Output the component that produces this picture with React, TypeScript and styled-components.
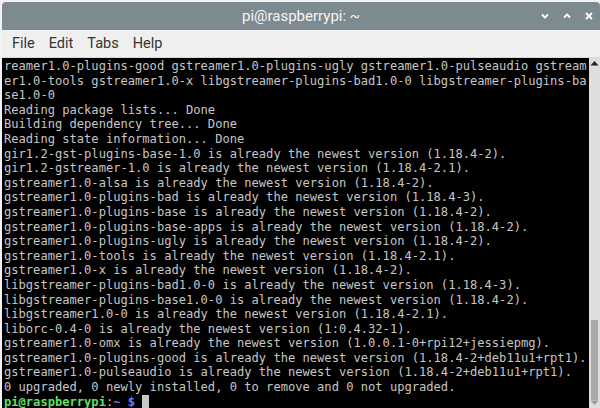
import React from 'react';
import styled, { createGlobalStyle } from 'styled-components';

const GlobalStyle = createGlobalStyle`
  html, body {
    margin: 0;
    padding: 0;
    background: #f2f2f2;
    overflow: hidden;
  }
`;

const Window = styled.div`
  width: 600px;
  height: 408px;
  box-sizing: border-box;
  padding: 2px 0 0 2px;
  display: flex;
  flex-direction: column;
  background: #f2f2f2;
`;

const TitleBar = styled.div`
  height: 28px;
  flex: none;
  position: relative;
  display: flex;
  align-items: center;
  justify-content: center;
  background: #7e8a92;
  border-radius: 4px 4px 0 0;
  font-family: Roboto, "Noto Sans", sans-serif;
  font-size: 15px;
  color: #f4f6f7;
`;

const Controls = styled.div`
  position: absolute;
  right: 5px;
  top: 0;
  bottom: 0;
  display: flex;
  align-items: center;
  gap: 10px;
`;

const MenuBar = styled.div`
  height: 27px;
  flex: none;
  display: flex;
  align-items: center;
  gap: 14px;
  padding-left: 10px;
  background: #efefef;
  border-bottom: 1px solid #d8d8d8;
  font-family: Roboto, "Noto Sans", sans-serif;
  font-size: 14.5px;
  color: #333;
`;

const Body = styled.div`
  flex: 1;
  display: flex;
  min-height: 0;
`;

const Terminal = styled.div`
  flex: 1;
  background: #000;
  padding: 1px 0 0 2px;
  overflow: hidden;
  font-family: "DejaVu Sans Mono", "Liberation Mono", monospace;
  font-size: 12.1px;
  line-height: 14.6px;
  color: #c6c6c6;
  white-space: pre;
`;

const Line = styled.div`
  height: 14.6px;
`;

const User = styled.span`
  color: #5fe05f;
  font-weight: bold;
`;

const Path = styled.span`
  color: #6f7bff;
  font-weight: bold;
`;

const Cursor = styled.span`
  display: inline-block;
  width: 7px;
  height: 14px;
  vertical-align: -3px;
  background: #c8c8c8;
`;

const Scrollbar = styled.div`
  width: 11px;
  flex: none;
  display: flex;
  flex-direction: column;
  align-items: center;
  background: #dedede;
  padding: 2px 0;
`;

const Track = styled.div`
  flex: 1;
  width: 100%;
  display: flex;
  flex-direction: column;
  justify-content: flex-end;
  align-items: center;
`;

const Thumb = styled.div`
  width: 7px;
  height: 80px;
  background: #a9a9a9;
`;

const Arrow = styled.svg`
  flex: none;
`;

const lines = [
  'reamer1.0-plugins-good gstreamer1.0-plugins-ugly gstreamer1.0-pulseaudio gstream',
  'er1.0-tools gstreamer1.0-x libgstreamer-plugins-bad1.0-0 libgstreamer-plugins-ba',
  'se1.0-0',
  'Reading package lists... Done',
  'Building dependency tree... Done',
  'Reading state information... Done',
  'gir1.2-gst-plugins-base-1.0 is already the newest version (1.18.4-2).',
  'gir1.2-gstreamer-1.0 is already the newest version (1.18.4-2.1).',
  'gstreamer1.0-alsa is already the newest version (1.18.4-2).',
  'gstreamer1.0-plugins-bad is already the newest version (1.18.4-3).',
  'gstreamer1.0-plugins-base is already the newest version (1.18.4-2).',
  'gstreamer1.0-plugins-base-apps is already the newest version (1.18.4-2).',
  'gstreamer1.0-plugins-ugly is already the newest version (1.18.4-2).',
  'gstreamer1.0-tools is already the newest version (1.18.4-2.1).',
  'gstreamer1.0-x is already the newest version (1.18.4-2).',
  'libgstreamer-plugins-bad1.0-0 is already the newest version (1.18.4-3).',
  'libgstreamer-plugins-base1.0-0 is already the newest version (1.18.4-2).',
  'libgstreamer1.0-0 is already the newest version (1.18.4-2.1).',
  'liborc-0.4-0 is already the newest version (1:0.4.32-1).',
  'gstreamer1.0-omx is already the newest version (1.0.0.1-0+rpi12+jessiepmg).',
  'gstreamer1.0-plugins-good is already the newest version (1.18.4-2+deb11u1+rpt1).',
  'gstreamer1.0-pulseaudio is already the newest version (1.18.4-2+deb11u1+rpt1).',
  '0 upgraded, 0 newly installed, 0 to remove and 0 not upgraded.',
];

const App: React.FC = () => {
  return (
    <>
      <GlobalStyle />
      <Window>
        <TitleBar>
          pi@raspberrypi: ~
          <Controls>
            <svg width="12" height="12" viewBox="0 0 12 12">
              <path d="M3 4.5 L6 7.5 L9 4.5" stroke="#fff" strokeWidth="1.8" fill="none" />
            </svg>
            <svg width="12" height="12" viewBox="0 0 12 12">
              <path d="M3 7.5 L6 4.5 L9 7.5" stroke="#fff" strokeWidth="1.8" fill="none" />
            </svg>
            <svg width="12" height="12" viewBox="0 0 12 12">
              <path d="M3 3 L9 9 M9 3 L3 9" stroke="#fff" strokeWidth="1.8" fill="none" />
            </svg>
          </Controls>
        </TitleBar>
        <MenuBar>
          <span>File</span>
          <span>Edit</span>
          <span>Tabs</span>
          <span>Help</span>
        </MenuBar>
        <Body>
          <Terminal>
            {lines.map((l, i) => (
              <Line key={i}>{l}</Line>
            ))}
            <Line>
              <User>pi@raspberrypi</User>:<Path>~ $</Path> <Cursor />
            </Line>
          </Terminal>
          <Scrollbar>
            <Arrow width="9" height="6" viewBox="0 0 9 6">
              <path d="M0.5 5.5 L4.5 1 L8.5 5.5 Z" fill="#222" />
            </Arrow>
            <Track>
              <Thumb />
            </Track>
            <Arrow width="9" height="6" viewBox="0 0 9 6">
              <path d="M0.5 0.5 L4.5 5 L8.5 0.5 Z" fill="#9a9a9a" />
            </Arrow>
          </Scrollbar>
        </Body>
      </Window>
    </>
  );
};

export default App;
